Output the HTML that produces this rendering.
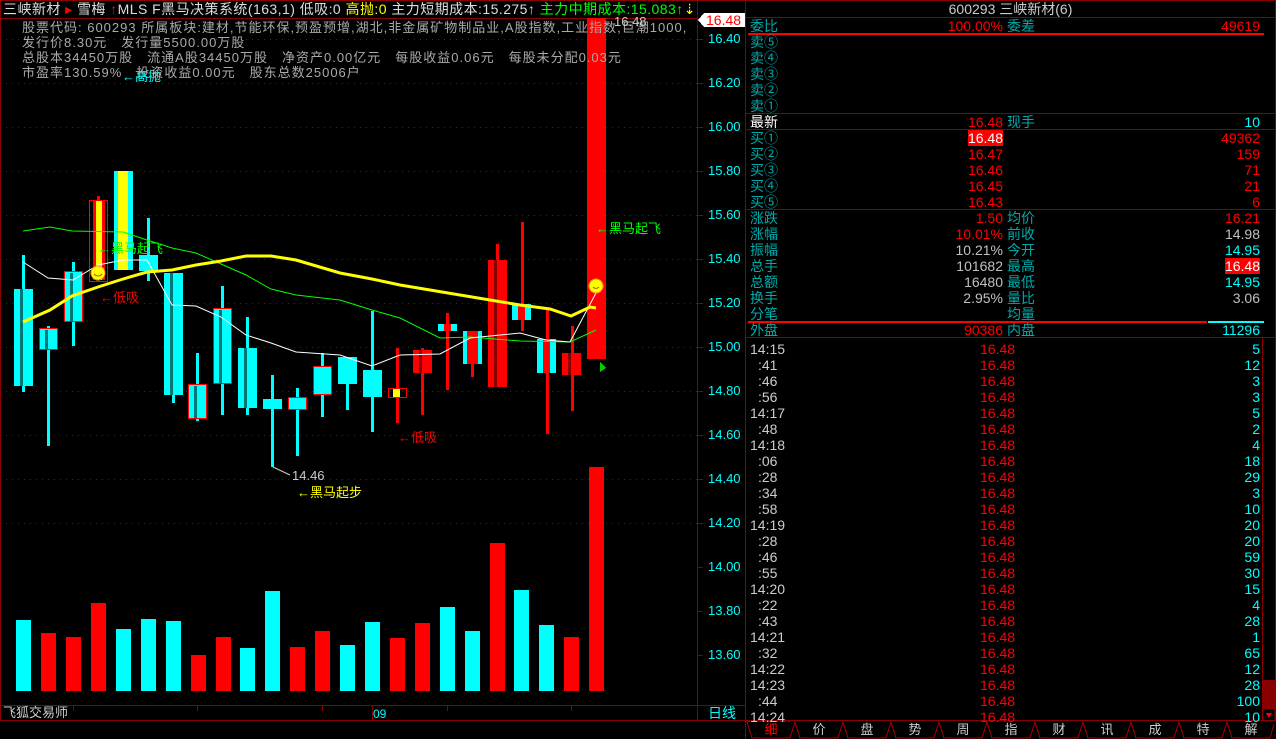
<!DOCTYPE html>
<html><head><meta charset="utf-8"><style>
body{margin:0;background:#000;width:1276px;height:739px;overflow:hidden;position:relative;font-family:"Liberation Sans","WenQuanYi Zen Hei","Noto Sans CJK SC",sans-serif;font-size:13px}
.a{position:absolute;white-space:nowrap;line-height:16px}
.c{color:#0bb}.r{color:#f00}.w{color:#c0c0c0}.cy{color:#0ff}.y{color:#ff0}.g{color:#0f0}
.row{position:absolute;left:745px;width:517px;height:16px;line-height:16px;font-size:14px}
.row span{position:absolute}
.l1{left:5px;color:#0aa}.v1{right:259px;text-align:right}.l2{left:262px;color:#0aa}.v2{right:2px;text-align:right}
.tb{position:absolute;top:722px;width:48px;text-align:center;color:#ccc;line-height:16px}
</style></head><body>
<svg width="1276" height="739" style="position:absolute;left:0;top:0" shape-rendering="crispEdges">
<rect x="0.5" y="0.5" width="1275" height="720" fill="none" stroke="#800"/>
<line x1="0" y1="18.5" x2="697" y2="18.5" stroke="#800"/>
<line x1="697.5" y1="0" x2="697.5" y2="721" stroke="#800"/>
<line x1="745.5" y1="0" x2="745.5" y2="739" stroke="#800"/>
<line x1="0" y1="705.5" x2="745" y2="705.5" stroke="#800"/>
<g stroke="#900" stroke-dasharray="1,5">
<line x1="0" y1="39.5" x2="697" y2="39.5"/><line x1="0" y1="83.5" x2="697" y2="83.5"/><line x1="0" y1="127.5" x2="697" y2="127.5"/><line x1="0" y1="171.5" x2="697" y2="171.5"/><line x1="0" y1="215.5" x2="697" y2="215.5"/><line x1="0" y1="259.5" x2="697" y2="259.5"/><line x1="0" y1="303.5" x2="697" y2="303.5"/><line x1="0" y1="347.5" x2="697" y2="347.5"/><line x1="0" y1="391.5" x2="697" y2="391.5"/><line x1="0" y1="435.5" x2="697" y2="435.5"/><line x1="0" y1="479.5" x2="697" y2="479.5"/><line x1="0" y1="523.5" x2="697" y2="523.5"/>
</g>
<g stroke="#800"><line x1="697" y1="39.5" x2="703" y2="39.5"/><line x1="697" y1="83.5" x2="703" y2="83.5"/><line x1="697" y1="127.5" x2="703" y2="127.5"/><line x1="697" y1="171.5" x2="703" y2="171.5"/><line x1="697" y1="215.5" x2="703" y2="215.5"/><line x1="697" y1="259.5" x2="703" y2="259.5"/><line x1="697" y1="303.5" x2="703" y2="303.5"/><line x1="697" y1="347.5" x2="703" y2="347.5"/><line x1="697" y1="391.5" x2="703" y2="391.5"/><line x1="697" y1="435.5" x2="703" y2="435.5"/><line x1="697" y1="479.5" x2="703" y2="479.5"/><line x1="697" y1="523.5" x2="703" y2="523.5"/><line x1="697" y1="567.5" x2="703" y2="567.5"/><line x1="697" y1="611.5" x2="703" y2="611.5"/><line x1="697" y1="655.5" x2="703" y2="655.5"/>
<line x1="73.5" y1="705" x2="73.5" y2="711"/><line x1="197.5" y1="705" x2="197.5" y2="711"/><line x1="322.5" y1="705" x2="322.5" y2="711"/><line x1="372.5" y1="705" x2="372.5" y2="720"/><line x1="447.5" y1="705" x2="447.5" y2="711"/><line x1="571.5" y1="705" x2="571.5" y2="711"/>
</g>
<g fill="#0ff">
<rect x="22" y="255" width="3" height="137"/><rect x="47" y="326" width="3" height="120"/><rect x="72" y="262" width="3" height="84"/><rect x="122" y="171" width="3" height="99"/><rect x="147" y="218" width="3" height="63"/><rect x="172" y="273" width="3" height="130"/><rect x="196" y="353" width="3" height="68"/><rect x="221" y="286" width="3" height="129"/><rect x="246" y="317" width="3" height="98"/><rect x="271" y="375" width="3" height="92"/><rect x="296" y="388" width="3" height="68"/><rect x="321" y="353" width="3" height="64"/><rect x="346" y="357" width="3" height="53"/><rect x="371" y="311" width="3" height="121"/>
</g>
<g fill="#f00">
<rect x="97" y="196" width="3" height="10"/><rect x="396" y="348" width="3" height="75"/><rect x="421" y="348" width="3" height="67"/><rect x="446" y="313" width="3" height="77"/><rect x="471" y="331" width="3" height="46"/><rect x="496" y="244" width="3" height="143"/><rect x="521" y="222" width="3" height="109"/><rect x="546" y="308" width="3" height="126"/><rect x="571" y="326" width="3" height="85"/>
</g>
<g fill="#0ff">
<rect x="14" y="289" width="19" height="97"/><rect x="40" y="328" width="17" height="22"/><rect x="65" y="271" width="17" height="51"/><rect x="114" y="171" width="19" height="99"/><rect x="139" y="255" width="19" height="16"/><rect x="164" y="273" width="19" height="122"/><rect x="189" y="384" width="17" height="34"/><rect x="214" y="308" width="17" height="75"/><rect x="238" y="348" width="19" height="60"/><rect x="263" y="399" width="19" height="10"/><rect x="289" y="397" width="17" height="12"/><rect x="314" y="366" width="17" height="28"/><rect x="338" y="357" width="19" height="27"/><rect x="363" y="370" width="19" height="27"/>
<rect x="438" y="324" width="19" height="7"/><rect x="463" y="331" width="19" height="33"/><rect x="512" y="304" width="19" height="16"/><rect x="537" y="339" width="19" height="34"/>
</g>
<g fill="#077"><rect x="20" y="289" width="3" height="97"/><rect x="45" y="330" width="3" height="20"/><rect x="70" y="273" width="3" height="49"/><rect x="170" y="273" width="3" height="122"/><rect x="194" y="386" width="3" height="32"/><rect x="219" y="310" width="3" height="73"/><rect x="244" y="348" width="3" height="60"/></g>
<g fill="#ff0"><rect x="118" y="171" width="10" height="99"/><rect x="96" y="200" width="6" height="80"/><rect x="393" y="388" width="7" height="9"/></g>
<g fill="#f00">
<rect x="93" y="200" width="3" height="80"/><rect x="102" y="200" width="3" height="80"/>
<rect x="413" y="350" width="19" height="23"/><rect x="444" y="324" width="7" height="7"/><rect x="467" y="331" width="11" height="33"/><rect x="488" y="260" width="19" height="127"/><rect x="518" y="304" width="7" height="16"/><rect x="543" y="339" width="7" height="34"/><rect x="562" y="353" width="19" height="22"/><rect x="587" y="18" width="19" height="341"/>
</g>
<g fill="none" stroke="#f00"><rect x="39.5" y="328.5" width="18" height="21"/><rect x="64.5" y="271.5" width="18" height="50"/><rect x="89.5" y="200.5" width="18" height="81"/><rect x="188.5" y="384.5" width="18" height="34"/><rect x="213.5" y="308.5" width="18" height="75"/><rect x="288.5" y="397.5" width="18" height="12"/><rect x="313.5" y="366.5" width="18" height="28"/><rect x="388.5" y="388.5" width="18" height="9"/><rect x="587.5" y="18.5" width="18" height="340"/></g>
<g fill="#800"><rect x="419" y="350" width="3" height="23"/><rect x="494" y="260" width="3" height="127"/><rect x="568" y="353" width="3" height="22"/></g>
<g fill="none" shape-rendering="auto">
<polyline stroke="#0f0" stroke-width="1" points="23,231 50,227 72,231 123,232 147,240 172,248 196,253 221,264 246,275 271,289 296,295 340,300 372,310 400,318 440,338 470,337 520,341 570,342 596,330"/>
<polyline stroke="#fff" stroke-width="1" points="23,262 48,278 73,280 98,265 123,260 147,260 172,305 196,306 221,317 246,335 271,343 296,352 340,355 372,366 400,355 440,354 470,338 520,333 546,340 570,342 596,293"/>
<polyline stroke="#ff0" stroke-width="3" points="23,322 50,310 72,296 98,287 123,279 147,272 172,270 196,265 221,261 246,256 271,256 296,260 340,273 372,279 400,285 430,290 460,295 490,300 520,305 550,309 571,316 590,307 596,308"/>
<polyline stroke="#ccc" points="273,467 290,475"/>
</g>
<circle cx="98" cy="273" r="7" fill="#ff0" stroke="#f80"/><circle cx="596" cy="286" r="7" fill="#ff0" stroke="#f80"/>
<g stroke="#a60" fill="none" shape-rendering="auto"><path d="M94 274q4 4 8 0M593 287q3 3 6 0"/></g>
<path d="M600 362l0 10 6-4z" fill="#0c0"/>
<g fill="#0ff"><rect x="16" y="620" width="15" height="71"/><rect x="116" y="629" width="15" height="62"/><rect x="141" y="619" width="15" height="72"/><rect x="166" y="621" width="15" height="70"/><rect x="240" y="648" width="15" height="43"/><rect x="265" y="591" width="15" height="100"/><rect x="340" y="645" width="15" height="46"/><rect x="365" y="622" width="15" height="69"/><rect x="440" y="607" width="15" height="84"/><rect x="465" y="631" width="15" height="60"/><rect x="514" y="590" width="15" height="101"/><rect x="539" y="625" width="15" height="66"/></g>
<g fill="#f00"><rect x="41" y="633" width="15" height="58"/><rect x="66" y="637" width="15" height="54"/><rect x="91" y="603" width="15" height="88"/><rect x="191" y="655" width="15" height="36"/><rect x="216" y="637" width="15" height="54"/><rect x="290" y="647" width="15" height="44"/><rect x="315" y="631" width="15" height="60"/><rect x="390" y="638" width="15" height="53"/><rect x="415" y="623" width="15" height="68"/><rect x="490" y="543" width="15" height="148"/><rect x="564" y="637" width="15" height="54"/><rect x="589" y="467" width="15" height="224"/></g>
<path d="M698 20l6-7h41v14h-41z" fill="#fff"/>
<g fill="#800"><rect x="745" y="17" width="531" height="1"/><rect x="745" y="113" width="531" height="1"/><rect x="745" y="129" width="531" height="1"/><rect x="745" y="209" width="531" height="1"/><rect x="745" y="337" width="531" height="1"/><rect x="1262" y="338" width="1" height="383"/><rect x="745" y="720" width="531" height="1"/></g>
<rect x="748" y="33" width="516" height="2" fill="#f00"/>
<rect x="748" y="321" width="459" height="2" fill="#f00"/><rect x="1208" y="321" width="56" height="2" fill="#0ff"/>
<rect x="1263" y="680" width="12" height="29" fill="#800"/><rect x="1263" y="709" width="12" height="12" fill="none" stroke="#800"/>
<path d="M1266 713h6l-3 5z" fill="#f00"/>
<g fill="none" stroke="#a00"><path d="M747 722l5 16h38l5-16"/><path d="M795 722l5 16h38l5-16"/><path d="M843 722l5 16h38l5-16"/><path d="M891 722l5 16h38l5-16"/><path d="M939 722l5 16h38l5-16"/><path d="M987 722l5 16h38l5-16"/><path d="M1035 722l5 16h38l5-16"/><path d="M1083 722l5 16h38l5-16"/><path d="M1131 722l5 16h38l5-16"/><path d="M1179 722l5 16h38l5-16"/><path d="M1227 722l5 16h38l4-14"/></g>
<path d="M748 721.5h44" stroke="#a00" stroke-dasharray="2,2"/>
</svg>
<div class="a" style="left:3px;top:1px;color:#ddd;font-size:14px;letter-spacing:0.45px">三峡新材 <span class="r">▸</span> 雪梅 <span class="r">↑</span>MLS F黑马决策系统(163,1) 低吸:0 <span class="y">高抛:0</span> 主力短期成本:15.275↑ <span class="g">主力中期成本:15.083↑</span><span class="y">⇣</span></div>
<div class="a w" style="left:22px;top:20px;line-height:15px;color:#aaa;letter-spacing:1px">股票代码: 600293 所属板块:建材,节能环保,预盈预增,湖北,非金属矿物制品业,A股指数,工业指数,巨潮1000,<br>发行价8.30元　发行量5500.00万股<br>总股本34450万股　流通A股34450万股　净资产0.00亿元　每股收益0.06元　每股未分配0.03元<br>市盈率130.59%　投资收益0.00元　股东总数25006户</div>
<div class="a w" style="left:614px;top:14px;color:#ccc">16.48</div>
<div class="a cy" style="left:122px;top:69px">←高抛</div>
<div class="a g" style="left:98px;top:241px">←黑马起飞</div>
<div class="a r" style="left:100px;top:290px">←低吸</div>
<div class="a r" style="left:398px;top:430px">←低吸</div>
<div class="a w" style="left:292px;top:468px;color:#ccc">14.46</div>
<div class="a y" style="left:297px;top:485px">←黑马起步</div>
<div class="a g" style="left:596px;top:221px">←黑马起飞</div>
<div class="a" style="left:3px;top:705px;color:#ccc">飞狐交易师</div>
<div class="a cy" style="left:373px;top:706px;font-size:12px">09</div>
<div class="a cy" style="left:708px;top:705px;font-size:14px">日线</div>
<div class="a r" style="left:706px;top:12px;font-size:14px">16.48</div>
<div class="a cy" style="left:708px;top:31px">16.40</div>
<div class="a cy" style="left:708px;top:75px">16.20</div><div class="a cy" style="left:708px;top:119px">16.00</div><div class="a cy" style="left:708px;top:163px">15.80</div><div class="a cy" style="left:708px;top:207px">15.60</div><div class="a cy" style="left:708px;top:251px">15.40</div><div class="a cy" style="left:708px;top:295px">15.20</div><div class="a cy" style="left:708px;top:339px">15.00</div><div class="a cy" style="left:708px;top:383px">14.80</div><div class="a cy" style="left:708px;top:427px">14.60</div><div class="a cy" style="left:708px;top:471px">14.40</div><div class="a cy" style="left:708px;top:515px">14.20</div><div class="a cy" style="left:708px;top:559px">14.00</div><div class="a cy" style="left:708px;top:603px">13.80</div><div class="a cy" style="left:708px;top:647px">13.60</div>
<div class="a" style="left:745px;width:531px;text-align:center;top:1px;color:#ccc;font-size:14px">600293 三峡新材(6)</div>
<div class="row" style="top:18px"><span class="l1">委比</span><span class="v1 r">100.00%</span><span class="l2">委差</span><span class="v2 r">49619</span></div>
<div class="row" style="top:34px"><span class="l1">卖⑤</span></div><div class="row" style="top:50px"><span class="l1">卖④</span></div><div class="row" style="top:66px"><span class="l1">卖③</span></div><div class="row" style="top:82px"><span class="l1">卖②</span></div><div class="row" style="top:98px"><span class="l1">卖①</span></div>
<div class="row" style="top:114px"><span class="l1" style="color:#fff">最新</span><span class="v1 r">16.48</span><span class="l2">现手</span><span class="v2 cy">10</span></div>
<div class="row" style="top:130px"><span class="l1">买①</span><span class="v1" style="background:#f00;color:#fff">16.48</span><span class="v2 r">49362</span></div>
<div class="row" style="top:146px"><span class="l1">买②</span><span class="v1 r">16.47</span><span class="v2 r">159</span></div>
<div class="row" style="top:162px"><span class="l1">买③</span><span class="v1 r">16.46</span><span class="v2 r">71</span></div>
<div class="row" style="top:178px"><span class="l1">买④</span><span class="v1 r">16.45</span><span class="v2 r">21</span></div>
<div class="row" style="top:194px"><span class="l1">买⑤</span><span class="v1 r">16.43</span><span class="v2 r">6</span></div>
<div class="row" style="top:210px"><span class="l1">涨跌</span><span class="v1 r">1.50</span><span class="l2">均价</span><span class="v2 r">16.21</span></div>
<div class="row" style="top:226px"><span class="l1">涨幅</span><span class="v1 r">10.01%</span><span class="l2">前收</span><span class="v2 w">14.98</span></div>
<div class="row" style="top:242px"><span class="l1">振幅</span><span class="v1 w">10.21%</span><span class="l2">今开</span><span class="v2 cy">14.95</span></div>
<div class="row" style="top:258px"><span class="l1">总手</span><span class="v1 w">101682</span><span class="l2">最高</span><span class="v2" style="background:#f00;color:#fff">16.48</span></div>
<div class="row" style="top:274px"><span class="l1">总额</span><span class="v1 w">16480</span><span class="l2">最低</span><span class="v2 cy">14.95</span></div>
<div class="row" style="top:290px"><span class="l1">换手</span><span class="v1 w">2.95%</span><span class="l2">量比</span><span class="v2 w">3.06</span></div>
<div class="row" style="top:306px"><span class="l1">分笔</span><span class="l2">均量</span></div>
<div class="row" style="top:322px"><span class="l1">外盘</span><span class="v1 r">90386</span><span class="l2">内盘</span><span class="v2 cy">11296</span></div>
<div id="t" style="position:absolute;left:745px;top:341px;width:517px;line-height:16px;font-size:14px"></div>
<div class="tb" style="left:747px;color:#f00">细</div><div class="tb" style="left:795px">价</div><div class="tb" style="left:843px">盘</div><div class="tb" style="left:891px">势</div><div class="tb" style="left:939px">周</div><div class="tb" style="left:987px">指</div><div class="tb" style="left:1035px">财</div><div class="tb" style="left:1083px">讯</div><div class="tb" style="left:1131px">成</div><div class="tb" style="left:1179px">特</div><div class="tb" style="left:1227px">解</div>
<script>
var d=[["14:15",5],[":41",12],[":46",3],[":56",3],["14:17",5],[":48",2],["14:18",4],[":06",18],[":28",29],[":34",3],[":58",10],["14:19",20],[":28",20],[":46",59],[":55",30],["14:20",15],[":22",4],[":43",28],["14:21",1],[":32",65],["14:22",12],["14:23",28],[":44",100],["14:24",10]];
var h="";d.forEach(function(r){h+='<div style="position:relative;height:16px"><span style="position:absolute;left:'+(r[0].length<5?13:5)+'px;color:#ccc">'+r[0]+'</span><span style="position:absolute;left:235px;color:#f00">16.48</span><span style="position:absolute;right:2px;color:#0ff">'+r[1]+'</span></div>'});document.getElementById("t").innerHTML=h;
</script>
</body></html>
